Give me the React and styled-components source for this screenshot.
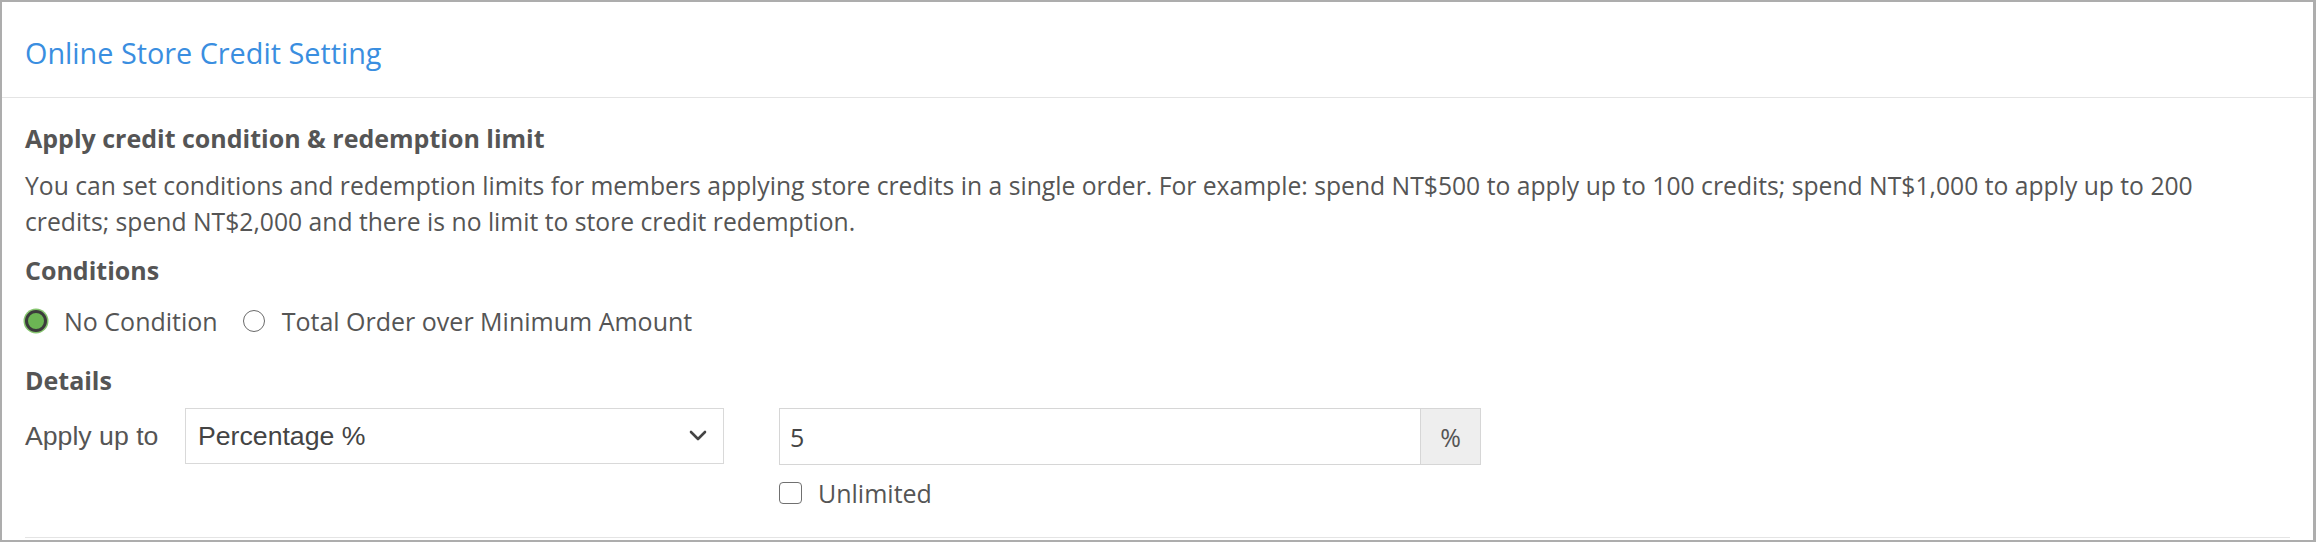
import styled, { createGlobalStyle } from "styled-components";

const GlobalStyle = createGlobalStyle`
  html, body {
    margin: 0;
    padding: 0;
    background: #ffffff;
  }
  body {
    font-family: "Open Sans", "Noto Sans", sans-serif;
    color: #555555;
  }
`;

const Panel = styled.div`
  width: 2316px;
  height: 542px;
  box-sizing: border-box;
  border: 2px solid #adadad;
  border-right-width: 3px;
  background: #ffffff;
  overflow: hidden;
`;

const Header = styled.div`
  padding: 30px 23px 23px;
  border-bottom: 1px solid #e4e4e4;
`;

const Title = styled.h1`
  margin: 0;
  font-size: 28.8px;
  line-height: 42px;
  font-weight: 400;
  color: #3a8ee0;
`;

const Section = styled.div`
  margin: 0 23px;
  padding: 22px 0 26px;
  border-bottom: 1px solid #e4e4e4;
`;

const Heading = styled.h3`
  margin: ${(p) => p.$top || 0}px 0 0;
  font-size: 25px;
  line-height: 36px;
  font-weight: 700;
  color: #555555;
`;

const Text = styled.p`
  margin: 12px 0 0;
  max-width: 2230px;
  font-size: 24.7px;
  line-height: 36px;
`;

const RadioRow = styled.div`
  display: flex;
  align-items: center;
  gap: 25px;
  margin-top: 15px;
  height: 36px;
`;

const RadioLabel = styled.label`
  display: flex;
  align-items: center;
  gap: 17px;
  font-size: 25px;
  line-height: 36px;
`;

const RadioDot = styled.span`
  box-sizing: border-box;
  width: 22px;
  height: 22px;
  border-radius: 50%;
  border: ${(p) => (p.$on ? "3px solid #3b3b3b" : "1.5px solid #6a6a6a")};
  background: ${(p) => (p.$on ? "#6cb554" : "#ffffff")};
  box-shadow: ${(p) => (p.$on ? "0 0 0 1.5px #86c56f" : "none")};
`;

const FieldRow = styled.div`
  display: flex;
  align-items: flex-start;
  margin-top: 10px;
`;

const FieldLabel = styled.div`
  width: 160px;
  height: 56px;
  display: flex;
  align-items: center;
  font-family: "Liberation Sans", Arial, sans-serif;
  font-size: 26.67px;
`;

const Select = styled.div`
  box-sizing: border-box;
  width: 539px;
  height: 56px;
  display: flex;
  align-items: center;
  justify-content: space-between;
  padding: 0 16px 0 12px;
  border: 1px solid #d9d9d9;
  font-family: "Liberation Sans", Arial, sans-serif;
  font-size: 26.67px;
  color: #444444;
`;

const ValueColumn = styled.div`
  margin-left: 55px;
  display: flex;
  flex-direction: column;
`;

const InputGroup = styled.div`
  display: flex;
  width: 702px;
  height: 57px;
  box-sizing: border-box;
  border: 1px solid #d6d6d6;
`;

const Input = styled.div`
  flex: 1;
  display: flex;
  align-items: center;
  padding-left: 10px;
  font-size: 25px;
  color: #444444;
`;

const Addon = styled.div`
  width: 59px;
  display: flex;
  align-items: center;
  justify-content: center;
  border-left: 1px solid #d6d6d6;
  background: #eeeeee;
  font-size: 25px;
  color: #555555;
`;

const CheckRow = styled.label`
  display: flex;
  align-items: center;
  gap: 16px;
  margin-top: 10px;
  height: 36px;
  font-size: 25px;
`;

const Box = styled.span`
  box-sizing: border-box;
  width: 23px;
  height: 22px;
  border: 1.5px solid #707070;
  border-radius: 4px;
  background: #ffffff;
`;

const Chevron = () => (
  <svg width="18" height="12" viewBox="0 0 18 12" fill="none">
    <polyline
      points="2,2 9,9 16,2"
      stroke="#444444"
      strokeWidth="2.6"
      strokeLinecap="round"
      strokeLinejoin="round"
    />
  </svg>
);

export default function App() {
  return (
    <>
      <GlobalStyle />
      <Panel>
        <Header>
          <Title>Online Store Credit Setting</Title>
        </Header>
        <Section>
          <Heading>Apply credit condition &amp; redemption limit</Heading>
          <Text>
            You can set conditions and redemption limits for members applying
            store credits in a single order. For example: spend NT$500 to apply
            up to 100 credits; spend NT$1,000 to apply up to 200 credits; spend
            NT$2,000 and there is no limit to store credit redemption.
          </Text>

          <Heading $top={12}>Conditions</Heading>
          <RadioRow>
            <RadioLabel>
              <RadioDot $on />
              No Condition
            </RadioLabel>
            <RadioLabel>
              <RadioDot />
              Total Order over Minimum Amount
            </RadioLabel>
          </RadioRow>

          <Heading $top={23}>Details</Heading>
          <FieldRow>
            <FieldLabel>Apply up to</FieldLabel>
            <Select>
              Percentage %
              <Chevron />
            </Select>
            <ValueColumn>
              <InputGroup>
                <Input>5</Input>
                <Addon>%</Addon>
              </InputGroup>
              <CheckRow>
                <Box />
                Unlimited
              </CheckRow>
            </ValueColumn>
          </FieldRow>
        </Section>
      </Panel>
    </>
  );
}
